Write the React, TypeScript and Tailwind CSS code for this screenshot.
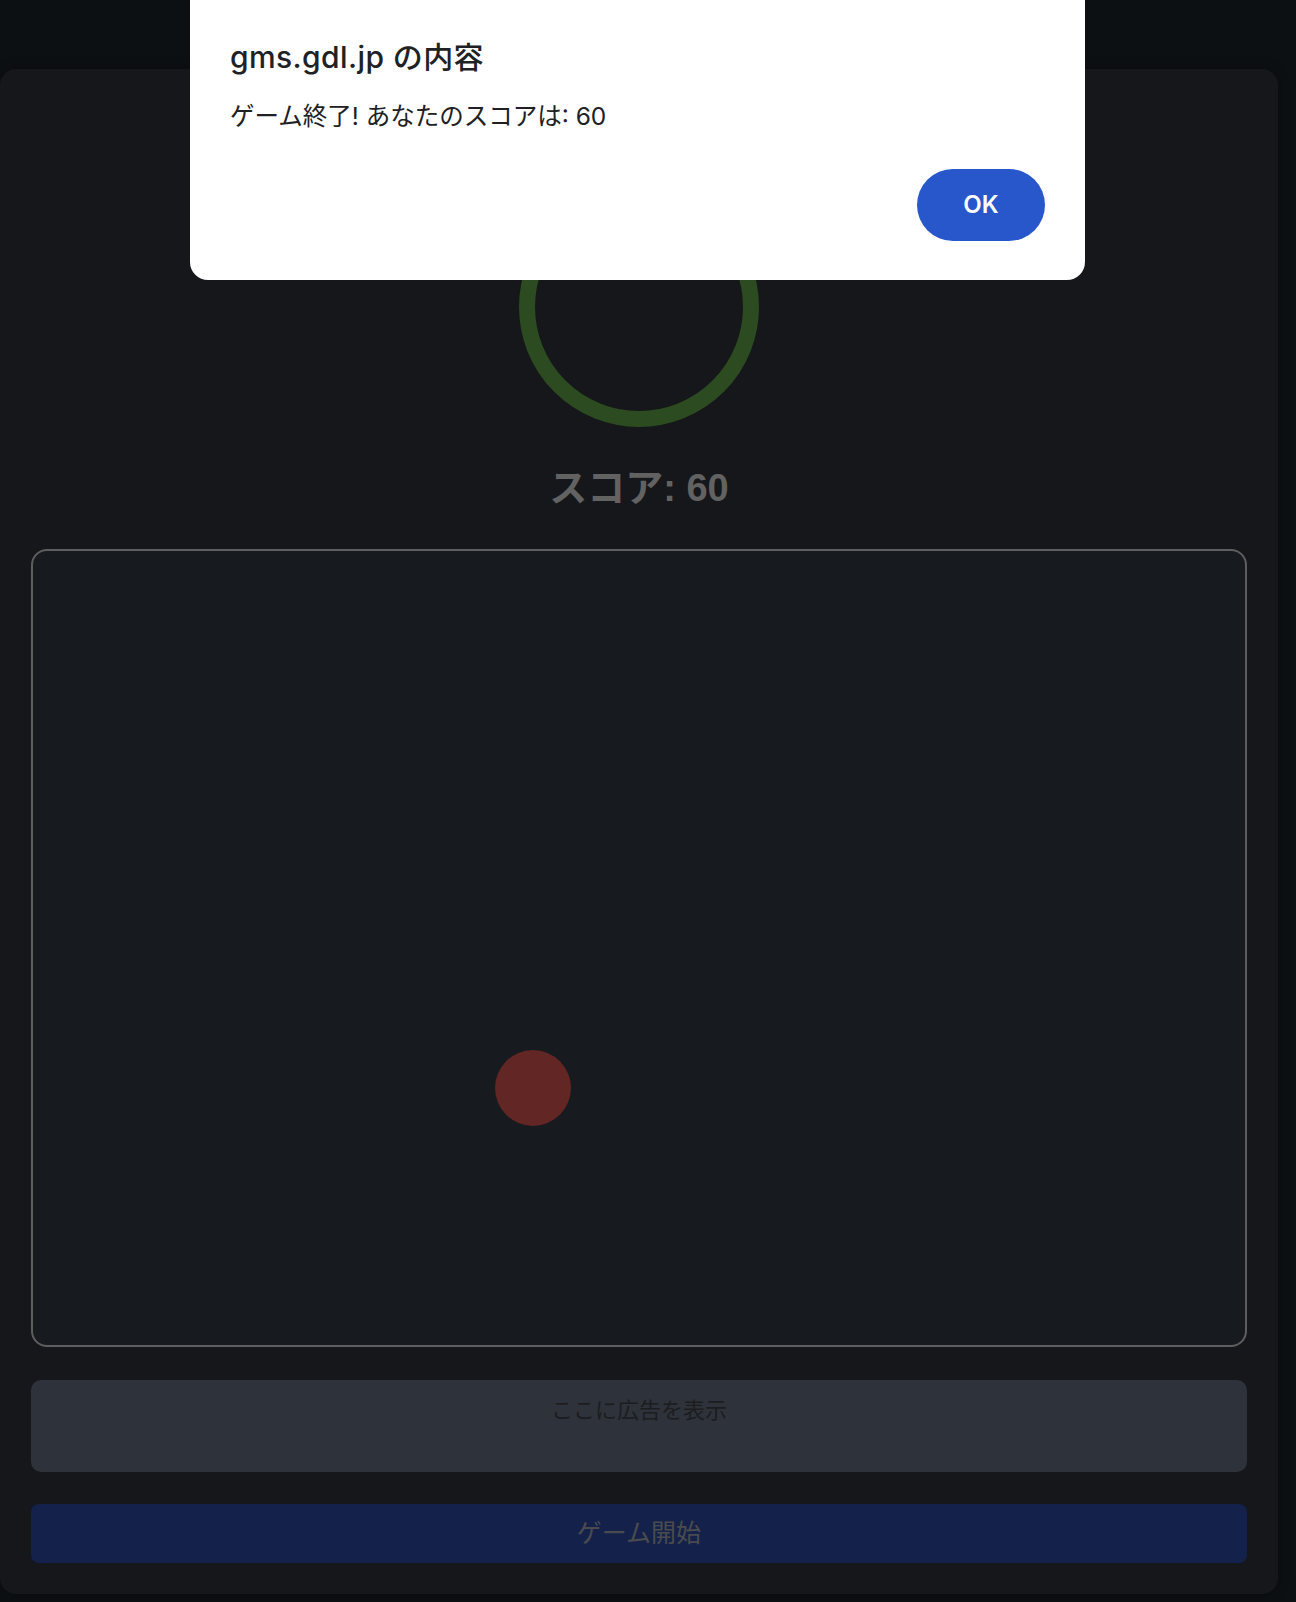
const jp = "font-['Liberation_Sans','Noto_Sans_CJK_JP',sans-serif]";
const dlg = "font-['Inter','Noto_Sans_CJK_JP',sans-serif]";

const AlertDialog: React.FC = () => (
  <div className="absolute top-0 left-[190px] z-10 w-[895px] rounded-b-[18px] bg-white px-[40px] pt-[40px] pb-[39px]">
    <h2 className={`${dlg} text-[30px] leading-[34px] tracking-[0.4px] font-medium text-[#202124]`}>
      gms.gdl.jp の内容
    </h2>
    <p className={`${dlg} mt-[27px] text-[24.5px] leading-[30px] text-[#202124]`}>
      ゲーム終了! あなたのスコアは: 60
    </p>
    <div className="mt-[38px] flex justify-end">
      <button
        className={`${dlg} h-[72px] w-[128px] rounded-full bg-[#2857cc] text-[24px] font-semibold text-white`}
      >
        OK
      </button>
    </div>
  </div>
);

const App: React.FC = () => {
  return (
    <div className="relative min-h-[1602px] w-[1296px] bg-[#0d1013]">
      <AlertDialog />

      <div className="pt-[69px]">
        <div className="flex w-[1278px] flex-col items-center rounded-[16px] bg-[#15171b] px-[31px] pt-[118px] pb-[31px] shadow-[0_0_12px_rgba(0,0,0,0.35)]">
          {/* timer ring */}
          <div className="h-[240px] w-[240px] rounded-full border-[16px] border-[#2c4b20]" />

          <div className={`${jp} mt-[34px] text-[38px] leading-[54px] font-bold text-[#626262]`}>
            スコア: 60
          </div>

          {/* play field */}
          <div className="relative mt-[34px] h-[798px] w-full rounded-[16px] border-2 border-[#5e5e5e] bg-[#171a1f]">
            <div className="absolute left-[462px] top-[499px] h-[76px] w-[76px] rounded-full bg-[#622624]" />
          </div>

          <div className="mt-[33px] h-[92px] w-full rounded-[10px] bg-[#2e323a] pt-[14px] text-center">
            <span className={`${jp} text-[22px] leading-[33px] text-[#1c1d20]`}>ここに広告を表示</span>
          </div>

          <button
            className={`${jp} mt-[32px] h-[59px] w-full rounded-[8px] bg-[#14224b] text-[25px] text-[#4b4b4f]`}
          >
            ゲーム開始
          </button>
        </div>
      </div>
    </div>
  );
};

export default App;
